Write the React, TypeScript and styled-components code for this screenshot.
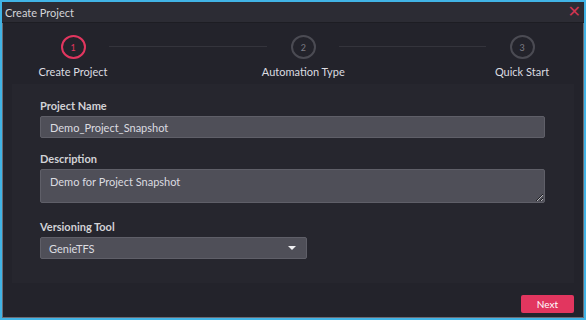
import React from "react";
import styled, { createGlobalStyle } from "styled-components";

const pink = "#e2365f";
const text = "#dcdce0";

const GlobalStyle = createGlobalStyle`
  html, body {
    margin: 0;
    padding: 0;
    background: #23232b;
  }
  * {
    box-sizing: border-box;
  }
`;

const Frame = styled.div`
  width: 586px;
  height: 320px;
  border: 2px solid #41b4e6;
  box-shadow: inset 0 0 0 1px #6c6c74;
  background: #23232b;
  display: flex;
  flex-direction: column;
  font-family: Lato, "Open Sans", sans-serif;
  color: ${text};
`;

const TitleBar = styled.div`
  height: 21px;
  flex-shrink: 0;
  background: #2c2c34;
  border-bottom: 1px solid #1d1d23;
  display: flex;
  align-items: center;
  justify-content: space-between;
  padding: 0 3px 0 3px;
  font-size: 11px;
  color: #d4d4d8;
`;

const Close = styled.button`
  border: 0;
  background: none;
  padding: 0;
  color: #cf3552;
  font-family: "DejaVu Sans", sans-serif;
  font-size: 16px;
  line-height: 1;
  cursor: pointer;
`;

const Stepper = styled.div`
  display: flex;
  align-items: flex-start;
  padding: 12px 22px 0 31px;
  height: 61px;
  flex-shrink: 0;
`;

const Step = styled.div`
  width: 80px;
  display: flex;
  flex-direction: column;
  align-items: center;
  gap: 6px;
`;

const Circle = styled.div<{ $active?: boolean }>`
  width: 25px;
  height: 24px;
  border-radius: 50%;
  border: 2px solid ${(p) => (p.$active ? pink : "#4b4b53")};
  color: ${(p) => (p.$active ? pink : "#7c7c84")};
  font-size: 9px;
  display: flex;
  align-items: center;
  justify-content: center;
`;

const StepLabel = styled.div`
  font-size: 11px;
  white-space: nowrap;
`;

const Line = styled.div<{ $grow: number }>`
  flex: ${(p) => p.$grow};
  height: 1px;
  background: #34343c;
  margin: 11px -4px 0;
`;

const Panel = styled.div`
  margin: 0 10px;
  padding: 16px 29px 24px 28px;
  background: #26262e;
  display: flex;
  flex-direction: column;
`;

const Label = styled.label`
  font-size: 11px;
  font-weight: 700;
  color: #d2d2d6;
  line-height: 12px;
  margin-bottom: 4px;
`;

const fieldStyle = `
  width: 100%;
  background: #4f4f58;
  border: 1px solid #5f5f68;
  border-radius: 2px;
  color: #dcdce0;
  font-family: Lato, "Open Sans", sans-serif;
  font-size: 11px;
  outline: none;
`;

const Input = styled.input`
  ${fieldStyle}
  height: 22px;
  padding: 0 9px;
  margin-bottom: 15px;
`;

const TextArea = styled.textarea`
  ${fieldStyle}
  height: 34px;
  padding: 5px 9px;
  resize: vertical;
  margin-bottom: 18px;
`;

const Select = styled.div`
  ${fieldStyle}
  width: 267px;
  height: 22px;
  padding: 0 8px;
  display: flex;
  align-items: center;
  justify-content: space-between;
`;

const Caret = styled.span`
  width: 0;
  height: 0;
  border-left: 4px solid transparent;
  border-right: 4px solid transparent;
  border-top: 4px solid #f0f0f2;
  margin-right: 2px;
`;

const Footer = styled.div`
  flex: 1;
  display: flex;
  justify-content: flex-end;
  align-items: flex-start;
  padding: 12px 10px 0 0;
`;

const NextButton = styled.button`
  width: 53px;
  height: 18px;
  border: 0;
  border-radius: 2px;
  background: ${pink};
  color: #fff;
  font-family: Lato, "Open Sans", sans-serif;
  font-size: 10px;
  padding: 0;
`;

const steps = ["Create Project", "Automation Type", "Quick Start"];

export default function App() {
  return (
    <>
      <GlobalStyle />
      <Frame>
        <TitleBar>
          <span>Create Project</span>
          <Close>✕</Close>
        </TitleBar>
        <Stepper>
          {steps.map((s, i) => (
            <React.Fragment key={s}>
              {i > 0 && <Line $grow={i === 1 ? 150 : 139} />}
              <Step>
                <Circle $active={i === 0}>{i + 1}</Circle>
                <StepLabel>{s}</StepLabel>
              </Step>
            </React.Fragment>
          ))}
        </Stepper>
        <Panel>
          <Label>Project Name</Label>
          <Input defaultValue="Demo_Project_Snapshot" />
          <Label>Description</Label>
          <TextArea defaultValue="Demo for Project Snapshot" />
          <Label>Versioning Tool</Label>
          <Select>
            <span>GenieTFS</span>
            <Caret />
          </Select>
        </Panel>
        <Footer>
          <NextButton>Next</NextButton>
        </Footer>
      </Frame>
    </>
  );
}
